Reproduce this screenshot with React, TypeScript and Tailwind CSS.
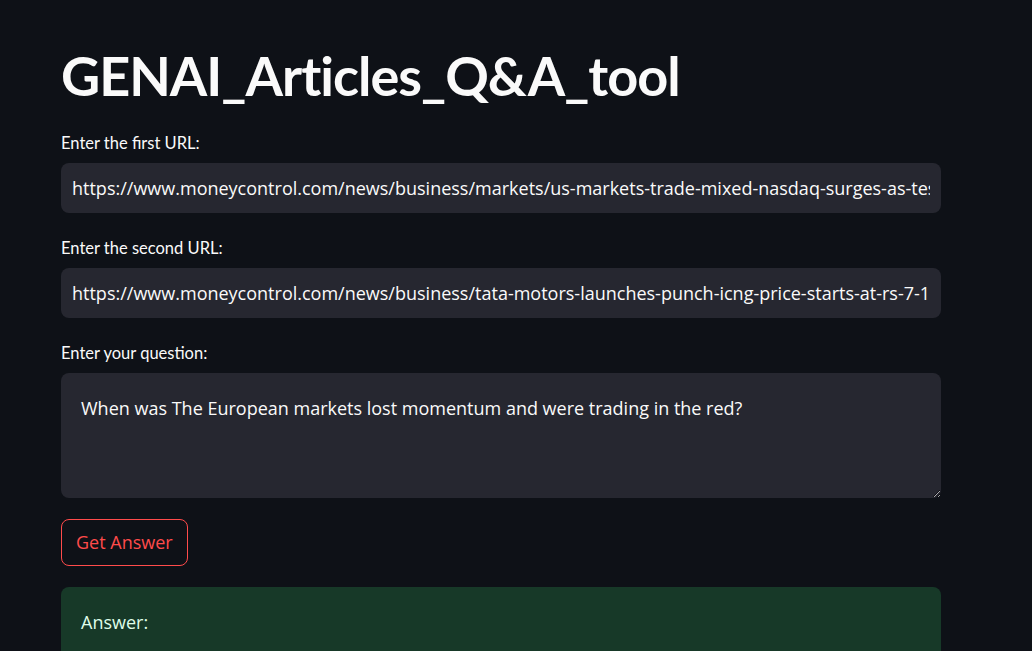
import * as React from "react";

const labelCls =
  "block text-[16.5px] leading-[22px] text-[#fafafa] font-['Lato','Noto_Sans',sans-serif]";
const inputCls =
  "block w-full h-[50px] rounded-lg bg-[#262730] px-[11px] text-[18px] text-[#fafafa] outline-none font-['Open_Sans','Noto_Sans',sans-serif]";

const App = () => {
  const [url1, setUrl1] = React.useState(
    "https://www.moneycontrol.com/news/business/markets/us-markets-trade-mixed-nasdaq-surges-as-tesla-jumps-11345221.html"
  );
  const [url2, setUrl2] = React.useState(
    "https://www.moneycontrol.com/news/business/tata-motors-launches-punch-icng-price-starts-at-rs-7-1-lakh-11098751.html"
  );
  const [question, setQuestion] = React.useState(
    "When was The European markets lost momentum and were trading in the red?"
  );

  return (
    <div className="min-h-[651px] w-full bg-[#0e1117] overflow-hidden">
      <div className="w-[880px] ml-[61px] pt-[44px]">
        <h1 className="text-[54px] leading-[64px] tracking-[-1px] font-bold text-[#fafafa] font-['Lato','Noto_Sans',sans-serif]">
          GENAI_Articles_Q&amp;A_tool
        </h1>

        <div className="mt-[24px]">
          <label htmlFor="url1" className={labelCls}>
            Enter the first URL:
          </label>
          <input
            id="url1"
            type="text"
            value={url1}
            onChange={(e) => setUrl1(e.target.value)}
            className={`${inputCls} mt-[9px]`}
          />
        </div>

        <div className="mt-[24px]">
          <label htmlFor="url2" className={labelCls}>
            Enter the second URL:
          </label>
          <input
            id="url2"
            type="text"
            value={url2}
            onChange={(e) => setUrl2(e.target.value)}
            className={`${inputCls} mt-[9px]`}
          />
        </div>

        <div className="mt-[24px]">
          <label htmlFor="question" className={labelCls}>
            Enter your question:
          </label>
          <textarea
            id="question"
            value={question}
            onChange={(e) => setQuestion(e.target.value)}
            className="block w-full h-[125px] mt-[9px] rounded-lg bg-[#262730] px-[20px] py-[21px] text-[18px] leading-[28px] text-[#fafafa] outline-none resize-y font-['Open_Sans','Noto_Sans',sans-serif]"
          />
        </div>

        <button
          type="button"
          className="mt-[21px] h-[47px] px-[14px] rounded-lg border border-[#ff4b4b] bg-[#0e1117] text-[18px] text-[#ff4b4b] font-['Open_Sans','Noto_Sans',sans-serif]"
        >
          Get Answer
        </button>

        <div className="mt-[21px] rounded-lg bg-[#173928] px-[20px] pt-[21px] pb-[30px]">
          <p className="text-[18px] leading-[28px] text-[#dffde9] font-['Open_Sans','Noto_Sans',sans-serif]">
            Answer:
          </p>
        </div>
      </div>
    </div>
  );
};

export default App;
